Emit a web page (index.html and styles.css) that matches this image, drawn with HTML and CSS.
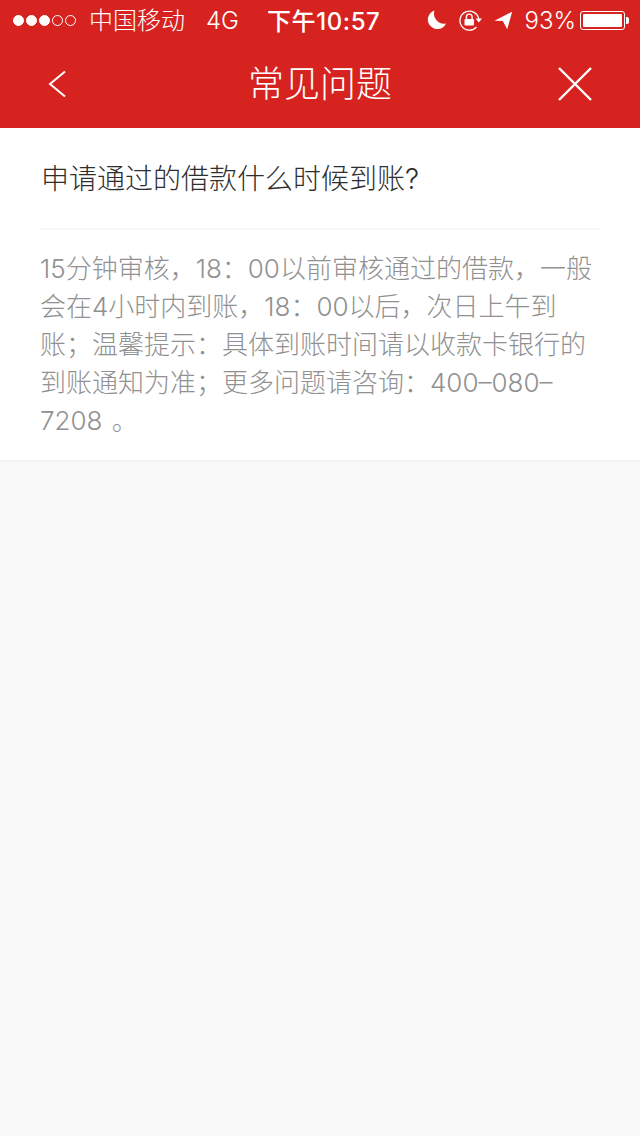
FILE: index.html
```html
<!DOCTYPE html>
<html lang="zh-CN">
<head>
<meta charset="utf-8">
<title>常见问题</title>
<link rel="stylesheet" href="styles.css">
</head>
<body>
<div class="header">
  <div class="status">
    <div class="signal"><i class="dot on"></i><i class="dot on"></i><i class="dot on"></i><i class="dot"></i><i class="dot"></i></div>
    <span class="carrier">中国移动</span>
    <span class="net">4G</span>
    <span class="time">下午10:57</span>
    <svg class="moon" width="20" height="22" viewBox="0 0 20 22"><path d="M7.5 1.5A9.5 9.5 0 1 0 19 14.5 10 10 0 0 1 7.5 1.5Z" fill="#fff"/></svg>
    <svg class="lock" width="24" height="24" viewBox="0 0 24 24"><path d="M18.5 19A9.5 9.5 0 1 1 20.8 11" fill="none" stroke="#fff" stroke-width="1.3"/><path d="M17.5 10.5H24l-3.2 4z" fill="#fff"/><rect x="6.5" y="11" width="9.5" height="6.5" rx="1" fill="#fff"/><path d="M8.4 11.5V9a2.85 2.85 0 0 1 5.7 0v2.5" fill="none" stroke="#fff" stroke-width="1.4"/></svg>
    <svg class="arrow" width="20" height="20" viewBox="0 0 20 20"><path d="M19.2 1.7 1.5 10.7l8.3.3 4.4 8.3z" fill="#fff"/></svg>
    <span class="pct">93%</span>
    <div class="battery"><div class="battery-body"><div class="battery-fill"></div></div><div class="battery-cap"></div></div>
  </div>
  <div class="nav">
    <svg class="back" width="18" height="28" viewBox="0 0 18 28"><path d="M17 1.5 2 14l15 12.5" fill="none" stroke="#fff" stroke-width="2"/></svg>
    <h1 class="title">常见问题</h1>
    <svg class="close" width="34" height="34" viewBox="0 0 34 34"><path d="M1 1l32 32M33 1 1 33" fill="none" stroke="#fff" stroke-width="2.4"/></svg>
  </div>
</div>
<div class="card">
  <div class="question">申请通过的借款什么时候到账?</div>
  <div class="answer">15分钟审核，18：00以前审核通过的借款，一般会在4小时内到账，18：00以后，次日上午到账；温馨提示：具体到账时间请以收款卡银行的到账通知为准；更多问题请咨询：400–080–7208 。</div>
</div>
</body>
</html>
```
FILE: styles.css
```css
* { box-sizing: border-box; }
html, body { margin: 0; padding: 0; }
body {
  width: 640px;
  height: 1136px;
  overflow: hidden;
  background: #f9f9f9;
  font-family: "Inter", "Noto Sans CJK SC", sans-serif;
}
.header { background: #d72320; color: #fff; height: 128px; }
.status {
  height: 40px;
  display: flex;
  align-items: center;
  padding-left: 13px;
  font-size: 24px;
  font-weight: 300;
}
.signal { display: flex; gap: 2px; width: 67px; }
.dot { width: 11px; height: 11px; border-radius: 50%; border: 1px solid #fff; }
.dot.on { background: #fff; }
.carrier { margin-left: 9px; padding-bottom: 3px; }
.net { margin-left: 21px; }
.time { margin-left: 28px; font-weight: 500; letter-spacing: 0.6px; padding-bottom: 1px; }
.moon { margin-left: 47px; }
.lock { margin-left: 11px; }
.arrow { margin-left: 11px; }
.pct { margin-left: 11px; }
.battery { display: flex; align-items: center; margin-left: 4px; }
.battery-body { width: 45px; height: 19px; border: 1px solid #fff; border-radius: 3px; padding: 2px; }
.battery-fill { width: 100%; height: 100%; background: #fff; border-radius: 1px; }
.battery-cap { width: 3px; height: 7px; background: #fff; border-radius: 0 2px 2px 0; margin-left: 1px; }
.nav {
  height: 88px;
  display: flex;
  align-items: center;
  justify-content: space-between;
  padding: 0 48px;
}
.title { margin: 0; font-size: 36px; font-weight: 300; line-height: 88px; margin-left: 16px; }
.card {
  background: #fff;
  padding: 0 40px;
  height: 334px;
  border-bottom: 2px solid #f2f2f2;
}
.question {
  height: 102px;
  padding: 30px 0 0 1px;
  font-size: 28px;
  line-height: 42px;
  font-weight: 300;
  color: #2e2e2e;
  border-bottom: 2px solid #f7f7f7;
}
.answer {
  padding-top: 20px;
  font-size: 26px;
  line-height: 38px;
  font-weight: 300;
  word-spacing: 2px;
  color: #919191;
}
```
